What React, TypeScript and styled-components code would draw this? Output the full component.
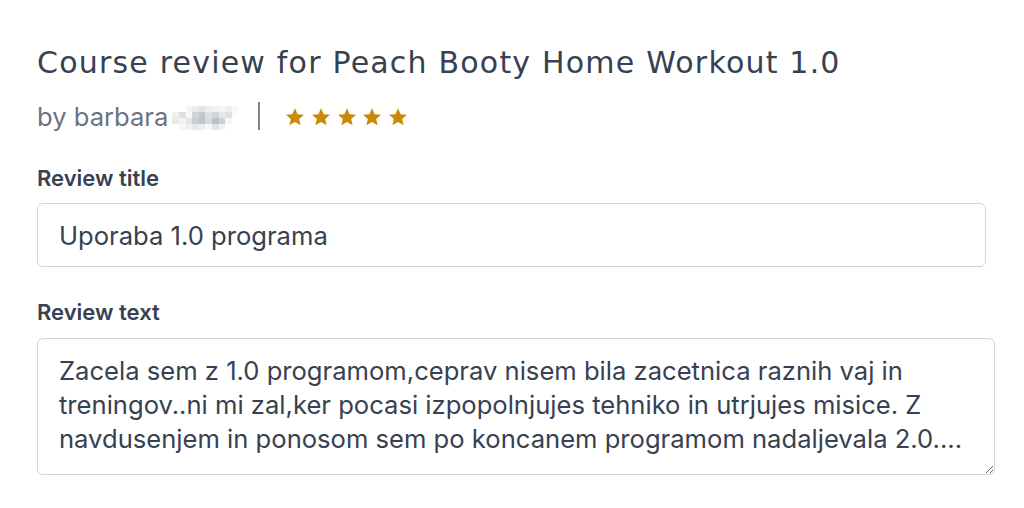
import * as React from 'react';
import styled, { createGlobalStyle } from 'styled-components';

const GlobalStyle = createGlobalStyle`
  html, body {
    margin: 0;
    padding: 0;
    background: #ffffff;
  }
  body {
    font-family: Inter, "Liberation Sans", sans-serif;
    color: #374151;
  }
`;

const Page = styled.div`
  width: 1024px;
  height: 508px;
  box-sizing: border-box;
  padding: 43px 0 0 37px;
  overflow: hidden;
`;

const Heading = styled.h1`
  margin: 0;
  font-family: "DejaVu Sans", "Noto Sans", sans-serif;
  font-weight: 400;
  font-size: 30px;
  line-height: 40px;
  color: #374151;
  letter-spacing: 1.2px;
  white-space: nowrap;
`;

const Byline = styled.div`
  display: flex;
  align-items: center;
  height: 40px;
  margin-top: 13px;
`;

const Author = styled.span`
  font-size: 25.6px;
  color: #6b7280;
  display: flex;
  align-items: center;
`;

const Blurred = styled.span`
  display: grid;
  grid-template-columns: repeat(10, 6.6px);
  grid-auto-rows: 6px;
  margin-left: 4px;
  margin-top: 3px;
`;

const Cell = styled.span<{ $shade: string }>`
  background: ${(p) => p.$shade};
`;

const Divider = styled.span`
  width: 2px;
  height: 28px;
  background: #7d8490;
  margin: 0 25px 0 20px;
`;

const Stars = styled.div`
  display: flex;
  gap: 5.7px;
  margin-top: 2px;
`;

const Field = styled.div`
  display: flex;
  flex-direction: column;
`;

const Label = styled.label<{ $top: number }>`
  display: block;
  margin-top: ${(p) => p.$top}px;
  font-size: 22px;
  font-weight: 600;
  line-height: 28px;
  color: #374151;
`;

const TextInput = styled.input`
  box-sizing: border-box;
  width: 949px;
  height: 64px;
  margin-top: 11px;
  padding: 0 21px;
  border: 1.5px solid #d1d5db;
  border-radius: 6px;
  font-family: Inter, "Liberation Sans", sans-serif;
  font-size: 25.6px;
  color: #374151;
  background: #fff;
  outline: none;
`;

const TextArea = styled.textarea`
  box-sizing: border-box;
  width: 958px;
  height: 137px;
  margin-top: 12px;
  padding: 15px 21px;
  border: 1.5px solid #d1d5db;
  border-radius: 6px;
  font-family: Inter, "Liberation Sans", sans-serif;
  font-size: 25.6px;
  line-height: 34px;
  color: #374151;
  background: #fff;
  outline: none;
  resize: vertical;
  overflow: hidden;
`;

const Star = () => (
  <svg width="20" height="20" viewBox="0 0 24 24">
    <path
      d="M12 1.6l3.1 7.1 7.7.7-5.8 5 1.7 7.6L12 18l-6.7 4 1.7-7.6-5.8-5 7.7-.7z"
      fill="#ca8a04"
    />
  </svg>
);

// pixelated surname, four rows of ten cells
const blurCells = [
  '#fff', '#fff', '#f3f4f5', '#eaebed', '#e2e4e7', '#eceef0', '#f1f2f3', '#f6f6f7', '#eceef0', '#f7f7f8',
  '#eef0f1', '#dcdfe2', '#f6f7f8', '#d2d5d9', '#c4c8cd', '#dee1e4', '#d2d5d9', '#e6e8ea', '#dfe1e4', '#fbfbfb',
  '#e8eaec', '#f2f3f4', '#e2e4e7', '#cbcfd3', '#c1c5ca', '#d7dade', '#bcc1c7', '#cdd0d5', '#f6f7f8', '#fff',
  '#fff', '#f6f7f8', '#eff0f2', '#e6e8ea', '#eceef0', '#f6f7f8', '#e1e3e6', '#f0f1f3', '#fff', '#fff',
];

const reviewText =
  'Zacela sem z 1.0 programom,ceprav nisem bila zacetnica raznih vaj in treningov..ni mi zal,ker pocasi izpopolnjujes tehniko in utrjujes misice. Z navdusenjem in ponosom sem po koncanem programom nadaljevala 2.0....';

export default function App() {
  return (
    <>
      <GlobalStyle />
      <Page>
        <Heading>Course review for Peach Booty Home Workout 1.0</Heading>
        <Byline>
          <Author>
            by barbara
            <Blurred>
              {blurCells.map((c, i) => (
                <Cell key={i} $shade={c} />
              ))}
            </Blurred>
          </Author>
          <Divider />
          <Stars>
            {[0, 1, 2, 3, 4].map((i) => (
              <Star key={i} />
            ))}
          </Stars>
        </Byline>
        <Field>
          <Label $top={28}>Review title</Label>
          <TextInput defaultValue="Uporaba 1.0 programa" />
        </Field>
        <Field>
          <Label $top={31}>Review text</Label>
          <TextArea defaultValue={reviewText} />
        </Field>
      </Page>
    </>
  );
}
